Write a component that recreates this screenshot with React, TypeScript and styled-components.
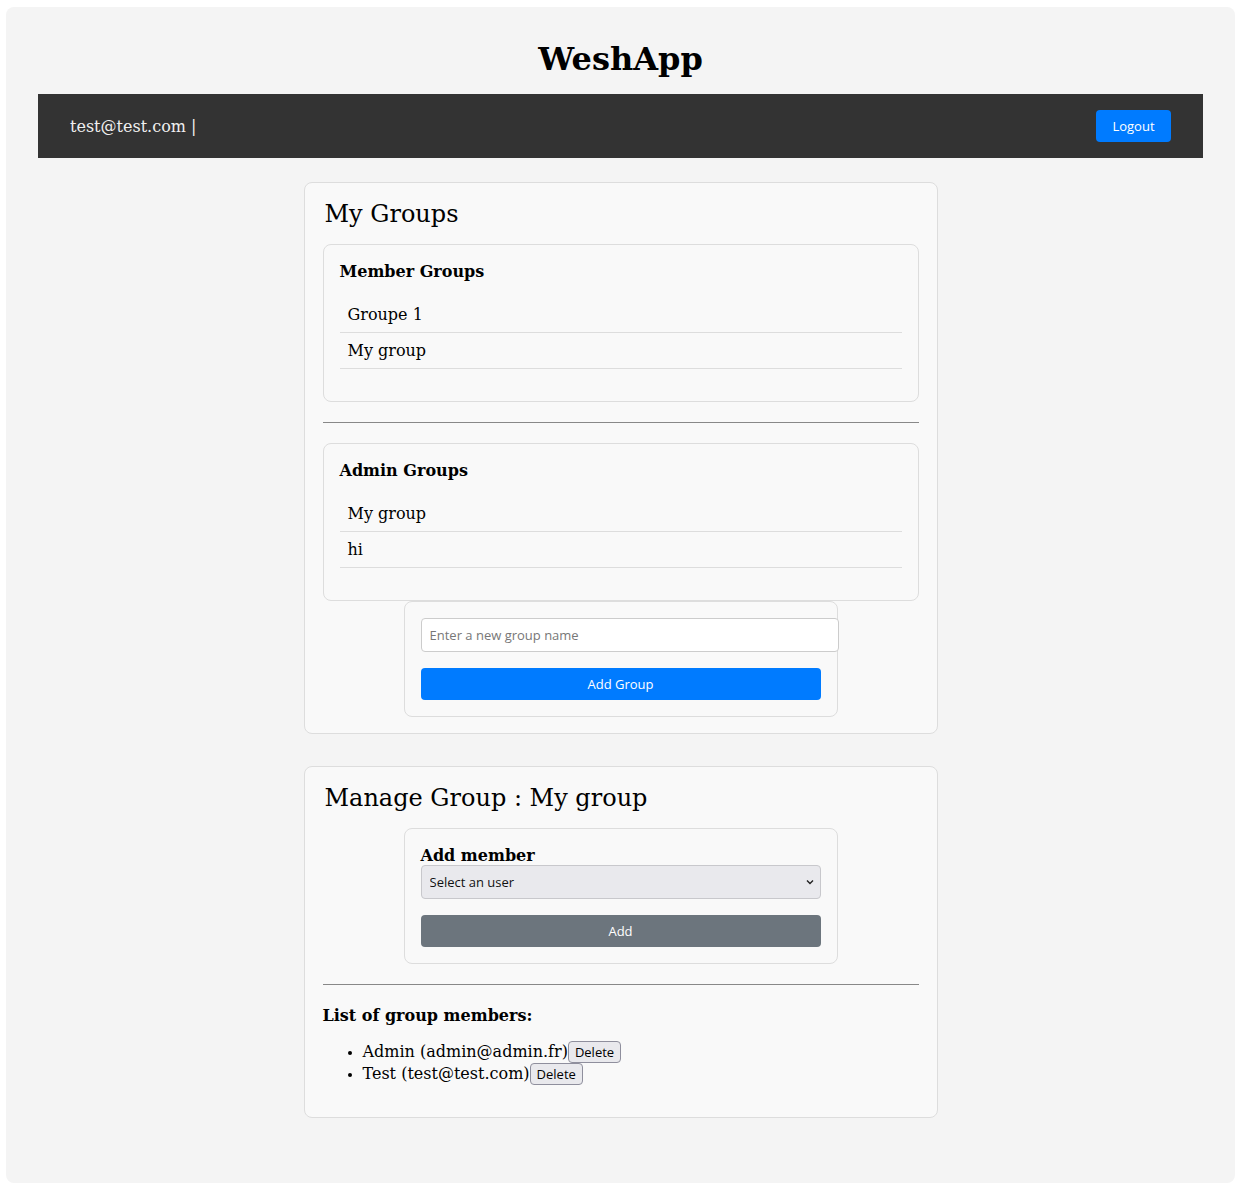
import React from "react";
import styled, { createGlobalStyle } from "styled-components";

const Global = createGlobalStyle`
  html, body { margin: 0; padding: 0; background: #ffffff; }
  body { font-family: "DejaVu Serif", serif; font-size: 16px; color: #000; }
`;

const SANS = `"Open Sans", "Noto Sans", sans-serif`;

const Page = styled.div`
  margin: 7px 7px 2px 6px;
  background: #f4f4f4;
  border-radius: 8px;
  padding: 34px 32px 65px;
`;

const Title = styled.h1`
  margin: 0 0 16px;
  font-family: "DejaVu Serif", serif;
  font-size: 32px;
  font-weight: bold;
  line-height: 37px;
  text-align: center;
`;

const NavBar = styled.nav`
  height: 64px;
  padding: 0 32px;
  background: #333333;
  display: flex;
  align-items: center;
  justify-content: space-between;
`;

const UserLabel = styled.span`
  color: #f0f0f0;
  font-size: 16px;
`;

const PrimaryButton = styled.button<{ $block?: boolean }>`
  height: 32px;
  width: ${(p) => (p.$block ? "100%" : "75px")};
  border: none;
  border-radius: 4px;
  background: #007bff;
  color: #ffffff;
  font-family: ${SANS};
  font-size: 13px;
  cursor: pointer;
`;

const SecondaryButton = styled(PrimaryButton)`
  background: #6c757d;
`;

const Main = styled.main`
  margin-top: 24px;
  display: flex;
  flex-direction: column;
  align-items: center;
  gap: 32px;
`;

const Card = styled.section`
  width: 596px;
  padding: 17px 18px 16px;
  background: #f9f9f9;
  border: 1px solid #dddddd;
  border-radius: 8px;
  display: flex;
  flex-direction: column;
`;

const CardTitle = styled.h2`
  margin: 0 0 16px;
  padding-left: 2px;
  font-size: 24px;
  font-weight: normal;
  line-height: 28px;
`;

const GroupBox = styled.div`
  border: 1px solid #dddddd;
  border-radius: 8px;
  padding: 17px 16px 16px;
`;

const BoxHeading = styled.h4<{ $gap?: number; $shift?: number }>`
  margin: 0 0 ${(p) => (p.$gap ?? 15)}px;
  padding-top: ${(p) => p.$shift ?? 0}px;
  font-size: 16px;
  font-weight: bold;
  line-height: ${(p) => 20 - (p.$shift ?? 0)}px;
`;

const GroupList = styled.ul`
  list-style: none;
  margin: 0 0 16px;
  padding: 0;
`;

const GroupItem = styled.li`
  padding: 8px;
  line-height: 19px;
  border-bottom: 1px solid #dddddd;
`;

const Divider = styled.hr`
  border: none;
  height: 1px;
  background: #888888;
  margin: 20px 0;
`;

const FormBox = styled.div`
  align-self: center;
  width: 400px;
  padding: 16px;
  border: 1px solid #dddddd;
  border-radius: 8px;
  display: flex;
  flex-direction: column;
  gap: 16px;
`;

const TextInput = styled.input`
  width: 100%;
  height: 32px;
  padding: 0 8px;
  margin: 0;
  border: 1px solid #cccccc;
  border-radius: 4px;
  background: #ffffff;
  font-family: ${SANS};
  font-size: 13px;
  color: #333;
  outline: none;
  &::placeholder { color: #777777; }
`;

const SelectWrap = styled.div`
  position: relative;
  width: 100%;
  height: 34px;
`;

const Select = styled.select`
  appearance: none;
  width: 100%;
  height: 34px;
  box-sizing: border-box;
  padding: 0 8px;
  border: 1px solid #c8c8cc;
  border-radius: 4px;
  background: #e9e9ed;
  font-family: ${SANS};
  font-size: 13px;
  color: #111;
  outline: none;
`;

const Chevron = styled.svg`
  position: absolute;
  right: 7px;
  top: 14px;
  pointer-events: none;
`;

const MemberHeading = styled.h4`
  margin: 1px 0 15px;
  font-size: 16px;
  font-weight: bold;
  line-height: 20px;
`;

const MemberList = styled.ul`
  margin: 0 0 16px;
  padding-left: 40px;
`;

const MemberItem = styled.li`
  line-height: 22px;
  font-size: 16px;
  &::marker { font-size: 13px; }
`;

const SmallButton = styled.button`
  box-sizing: border-box;
  height: 22px;
  padding: 0 6px;
  vertical-align: top;
  background: #e9e9ed;
  border: 1px solid #8f8f9d;
  border-radius: 4px;
  font-family: ${SANS};
  font-size: 13px;
  color: #000;
  line-height: 20px;
`;

export default function App() {
  const members = [
    { name: "Admin", email: "admin@admin.fr" },
    { name: "Test", email: "test@test.com" },
  ];
  return (
    <>
      <Global />
      <Page>
        <Title>WeshApp</Title>
        <NavBar>
          <UserLabel>test@test.com |</UserLabel>
          <PrimaryButton>Logout</PrimaryButton>
        </NavBar>
        <Main>
          <Card>
            <CardTitle>My Groups</CardTitle>
            <GroupBox>
              <BoxHeading>Member Groups</BoxHeading>
              <GroupList>
                <GroupItem>Groupe 1</GroupItem>
                <GroupItem>My group</GroupItem>
              </GroupList>
            </GroupBox>
            <Divider />
            <GroupBox>
              <BoxHeading>Admin Groups</BoxHeading>
              <GroupList>
                <GroupItem>My group</GroupItem>
                <GroupItem>hi</GroupItem>
              </GroupList>
            </GroupBox>
            <FormBox>
              <TextInput placeholder="Enter a new group name" />
              <PrimaryButton $block>Add Group</PrimaryButton>
            </FormBox>
          </Card>
          <Card>
            <CardTitle>Manage Group : My group</CardTitle>
            <FormBox>
              <div>
                <BoxHeading $gap={0} $shift={1}>Add member</BoxHeading>
                <SelectWrap>
                  <Select defaultValue="">
                    <option value="">Select an user</option>
                  </Select>
                  <Chevron width="8" height="6" viewBox="0 0 8 6">
                    <path d="M1 1.5 L4 4.5 L7 1.5" fill="none" stroke="#222" strokeWidth="1.4" />
                  </Chevron>
                </SelectWrap>
              </div>
              <SecondaryButton $block>Add</SecondaryButton>
            </FormBox>
            <Divider />
            <MemberHeading>List of group members:</MemberHeading>
            <MemberList>
              {members.map((m) => (
                <MemberItem key={m.email}>
                  {m.name} ({m.email})<SmallButton>Delete</SmallButton>
                </MemberItem>
              ))}
            </MemberList>
          </Card>
        </Main>
      </Page>
    </>
  );
}
